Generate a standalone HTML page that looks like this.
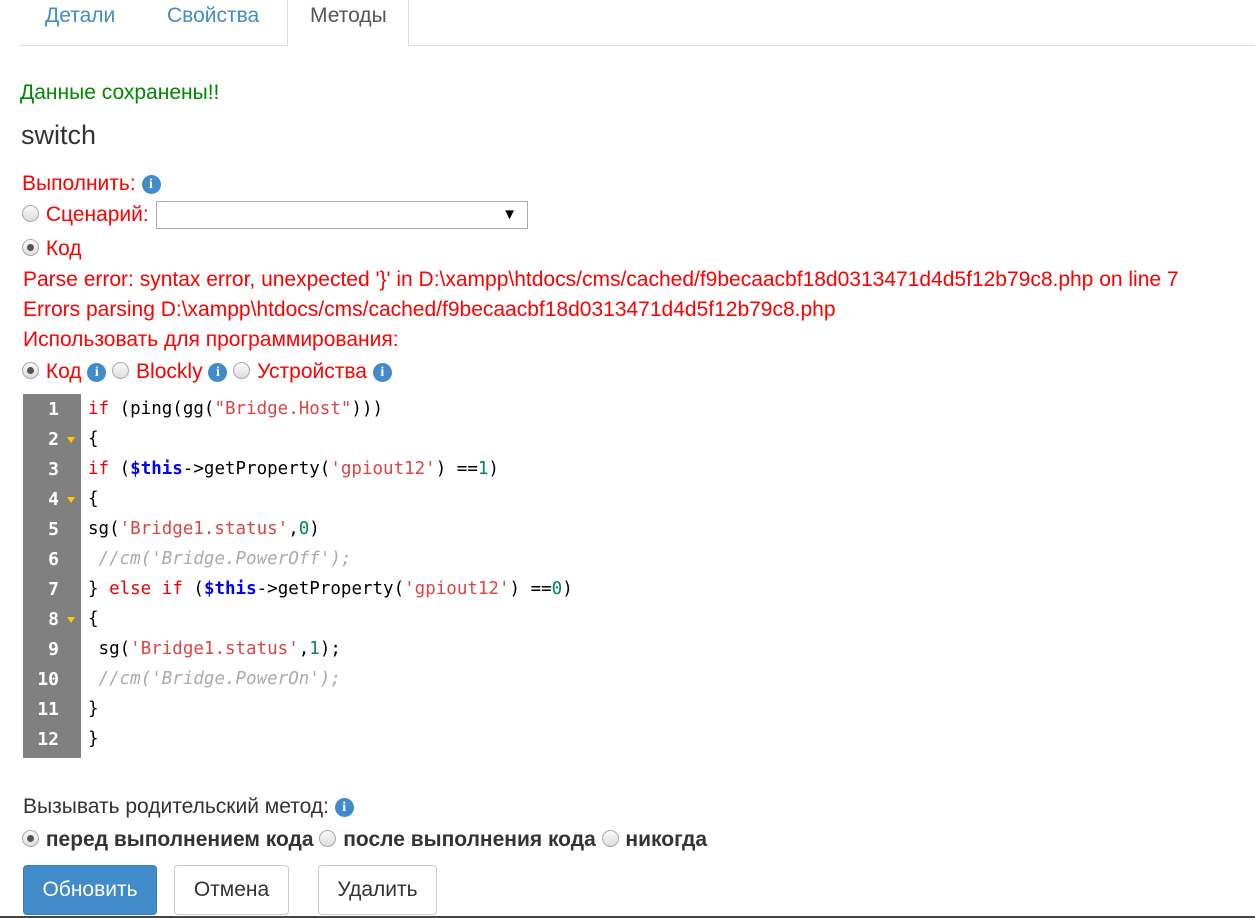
<!DOCTYPE html>
<html><head><meta charset="utf-8"><style>
body{margin:0;width:1255px;height:918px;background:#fff;font-family:"Liberation Sans",sans-serif;position:relative;overflow:hidden;font-size:21px}
.a{position:absolute;white-space:nowrap}
.r{color:#f00}
.i{display:inline-block;width:19px;height:19px;border-radius:50%;background:#428bca;color:#fff;font:bold 14px/19px "Liberation Serif",serif;text-align:center;vertical-align:2px}
.rad{display:inline-block;width:17px;height:17px;border-radius:50%;border:1px solid #aaa;background:linear-gradient(#fafafa,#ddd);box-sizing:border-box;vertical-align:-1px;position:relative;margin-right:1px}
.rad.on:after{content:"";position:absolute;left:4px;top:4px;width:7px;height:7px;border-radius:50%;background:#555}
.code{position:absolute;left:23px;top:394px;width:58px;height:364px;background:#808080}
.ln{position:absolute;left:23px;width:36px;text-align:right;color:#fff;font:bold 18px "DejaVu Sans Mono",monospace}
.cl{position:absolute;left:88px;font:17.5px "DejaVu Sans Mono",monospace;color:#000;white-space:pre}
.k{color:#e00}.s{color:#d44}.v{color:#00f;font-weight:bold}.n{color:#085}.c{color:#aaa;font-style:italic}
.fold{position:absolute;left:67px;width:0;height:0;border-left:4px solid transparent;border-right:4px solid transparent;border-top:6px solid #fc0}
.btn{position:absolute;top:865px;height:50px;border:1px solid #ccc;border-radius:4px;box-sizing:border-box;font-size:21px;line-height:48px;text-align:center;background:#fff;color:#333}
</style></head><body>
<div class="a" style="left:20px;top:45px;width:267px;height:1px;background:#ddd"></div>
<div class="a" style="left:409px;top:45px;width:846px;height:1px;background:#ddd"></div>
<div class="a" style="left:287px;top:0;width:1px;height:46px;background:#ddd"></div>
<div class="a" style="left:408px;top:0;width:1px;height:46px;background:#ddd"></div>
<div class="a" style="left:45px;top:4px;color:#428bca">Детали</div>
<div class="a" style="left:167px;top:4px;color:#428bca">Свойства</div>
<div class="a" style="left:310px;top:4px;color:#555">Методы</div>
<div class="a" style="left:20px;top:81px;color:#080">Данные сохранены!!</div>
<div class="a" style="left:21px;top:120px;font-size:27px;color:#333">switch</div>
<div class="a r" style="left:22px;top:172px">Выполнить: <span class="i">i</span></div>
<div class="a r" style="left:22px;top:203px"><span class="rad"></span> Сценарий: </div>
<div class="a" style="left:156px;top:201px;width:372px;height:28px;border:1px solid #aaa;box-sizing:border-box"><span style="position:absolute;right:10px;top:4px;font-size:15px">▼</span></div>
<div class="a r" style="left:22px;top:237px"><span class="rad on"></span> Код</div>
<div class="a r" style="left:23px;top:268px">Parse error: syntax error, unexpected '}' in D:\xampp\htdocs/cms/cached/f9becaacbf18d0313471d4d5f12b79c8.php on line 7</div>
<div class="a r" style="left:23px;top:298px">Errors parsing D:\xampp\htdocs/cms/cached/f9becaacbf18d0313471d4d5f12b79c8.php</div>
<div class="a r" style="left:23px;top:328px">Использовать для программирования:</div>
<div class="a r" style="left:22px;top:360px"><span class="rad on"></span> Код <span class="i">i</span> <span class="rad"></span> Blockly <span class="i">i</span> <span class="rad"></span> Устройства <span class="i">i</span></div>
<div class="code"></div>
<div class="ln" style="top:399px">1</div><div class="ln" style="top:429px">2</div><div class="ln" style="top:459px">3</div><div class="ln" style="top:489px">4</div><div class="ln" style="top:519px">5</div><div class="ln" style="top:549px">6</div><div class="ln" style="top:579px">7</div><div class="ln" style="top:609px">8</div><div class="ln" style="top:639px">9</div><div class="ln" style="top:669px">10</div><div class="ln" style="top:699px">11</div><div class="ln" style="top:729px">12</div>
<div class="fold" style="top:437px"></div><div class="fold" style="top:497px"></div><div class="fold" style="top:617px"></div>
<div class="cl" style="top:399px"><span class="k">if</span> (ping(gg(<span class="s">"Bridge.Host"</span>)))</div>
<div class="cl" style="top:429px">{</div>
<div class="cl" style="top:459px"><span class="k">if</span> (<span class="v">$this</span>-&gt;getProperty(<span class="s">'gpiout12'</span>) ==<span class="n">1</span>)</div>
<div class="cl" style="top:489px">{</div>
<div class="cl" style="top:519px">sg(<span class="s">'Bridge1.status'</span>,<span class="n">0</span>)</div>
<div class="cl" style="top:549px"> <span class="c">//cm('Bridge.PowerOff');</span></div>
<div class="cl" style="top:579px">} <span class="k">else</span> <span class="k">if</span> (<span class="v">$this</span>-&gt;getProperty(<span class="s">'gpiout12'</span>) ==<span class="n">0</span>)</div>
<div class="cl" style="top:609px">{</div>
<div class="cl" style="top:639px"> sg(<span class="s">'Bridge1.status'</span>,<span class="n">1</span>);</div>
<div class="cl" style="top:669px"> <span class="c">//cm('Bridge.PowerOn');</span></div>
<div class="cl" style="top:699px">}</div>
<div class="cl" style="top:729px">}</div>
<div class="a" style="left:23px;top:795px;color:#333">Вызывать родительский метод: <span class="i">i</span></div>
<div class="a" style="left:22px;top:828px;color:#333;font-weight:bold"><span class="rad on"></span> перед выполнением кода <span class="rad"></span> после выполнения кода <span class="rad"></span> никогда</div>
<div class="btn" style="left:23px;width:134px;background:#428bca;border-color:#357ebd;color:#fff">Обновить</div>
<div class="btn" style="left:174px;width:115px">Отмена</div>
<div class="btn" style="left:318px;width:119px">Удалить</div>
<div class="a" style="left:0;top:916px;width:1255px;height:2px;background:#444"></div>
</body></html>
